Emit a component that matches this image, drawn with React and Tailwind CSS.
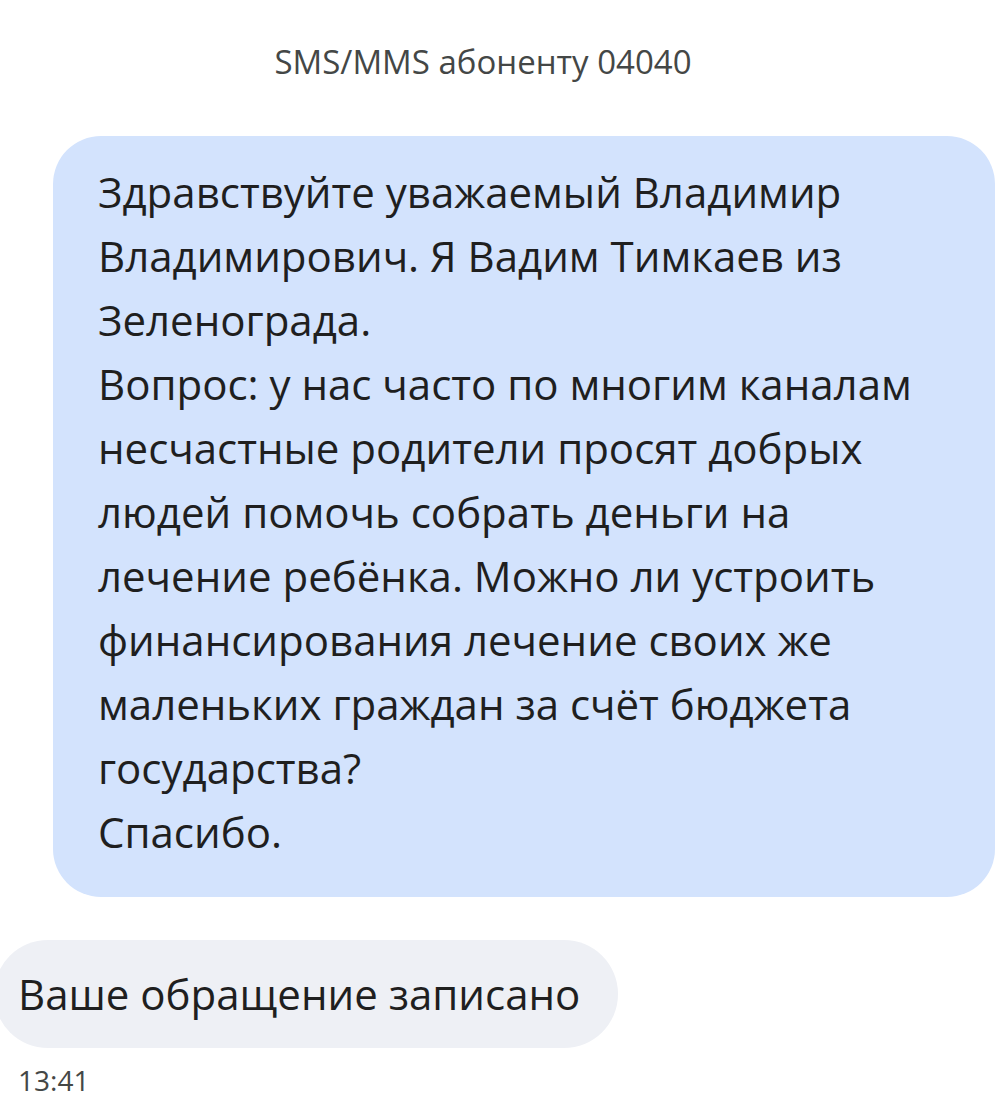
export default function App() {
  const lines = [
    'Здравствуйте уважаемый Владимир',
    'Владимирович. Я Вадим Тимкаев из',
    'Зеленограда.',
    'Вопрос: у нас часто по многим каналам',
    'несчастные родители просят добрых',
    'людей помочь собрать деньги на',
    'лечение ребёнка. Можно ли устроить',
    'финансирования лечение своих же',
    'маленьких граждан за счёт бюджета',
    'государства?',
    'Спасибо.',
  ];

  return (
    <div className="w-[1000px] h-[1102px] bg-white overflow-hidden font-['Open_Sans',sans-serif] text-[#1f1f1f]">
      <div className="pt-[42px] pr-[34px] text-center text-[33px] leading-[40px] text-[#444746]">SMS/MMS абоненту 04040</div>

      <div className="mt-[54px] ml-[53px] mr-[5px] rounded-[48px] bg-[#d3e3fd] pl-[45px] pr-6 pt-[24px] pb-[33px]">
        {lines.map((l) => (
          <div key={l} className="text-[42px] leading-[64px] whitespace-nowrap">{l}</div>
        ))}
      </div>

      <div className="mt-[43px] -ml-[6px] w-[624px] h-[108px] rounded-[54px] bg-[#eef0f5] flex items-center pl-[24px]">
        <span className="text-[42px] leading-[48px] whitespace-nowrap">Ваше обращение записано</span>
      </div>

      <div className="mt-[16px] pl-[18px] text-[28px] leading-[32px] text-[#444746]">13:41</div>
    </div>
  );
}
